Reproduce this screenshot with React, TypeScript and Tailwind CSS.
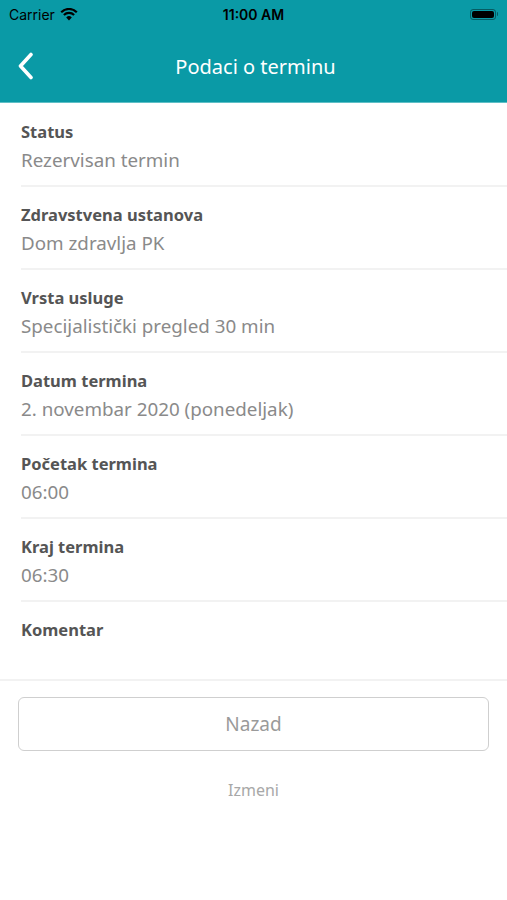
const ROWS = [
  { label: 'Status', value: 'Rezervisan termin' },
  { label: 'Zdravstvena ustanova', value: 'Dom zdravlja PK' },
  { label: 'Vrsta usluge', value: 'Specijalistički pregled 30 min' },
  { label: 'Datum termina', value: '2. novembar 2020 (ponedeljak)' },
  { label: 'Početak termina', value: '06:00' },
  { label: 'Kraj termina', value: '06:30' },
]

function StatusBar() {
  return (
    <div className="relative flex h-[28px] items-center px-[9px] text-[14px] text-black font-['Inter',sans-serif]">
      <div className="flex items-center gap-[5px]">
        <span>Carrier</span>
        <svg width="18" height="13" viewBox="0 0 18 13">
          <path d="M9 12.5 L6.2 9.4 A4 4 0 0 1 11.8 9.4 Z" fill="#000" />
          <path d="M3.9 7 A7.3 7.3 0 0 1 14.1 7" stroke="#000" strokeWidth="2.2" fill="none" />
          <path d="M1.2 4.2 A11 11 0 0 1 16.8 4.2" stroke="#000" strokeWidth="2.2" fill="none" />
        </svg>
      </div>
      <span className="absolute left-1/2 -translate-x-1/2 font-semibold">11:00 AM</span>
      <div className="ml-auto flex items-center">
        <div className="h-[11px] w-[26px] rounded-[3px] border border-black/40 p-[1px]">
          <div className="h-full w-full rounded-[2px] bg-black" />
        </div>
        <div className="ml-[1px] h-[4px] w-[1.5px] rounded-r bg-black/40" />
      </div>
    </div>
  )
}

export default function App() {
  return (
    <div className="flex min-h-[900px] flex-col bg-white font-['Noto_Sans',sans-serif]">
      <div className="bg-[#0a9aa6] border-b border-[#5fbfc6]">
        <StatusBar />
        <div className="relative flex h-[74px] items-center justify-center">
          <button className="absolute left-[17px] top-[24px]">
            <svg width="18" height="28" viewBox="0 0 18 28">
              <path d="M14 2.5 L3.5 14 L14 25.5" stroke="#fff" strokeWidth="3.6" fill="none" strokeLinecap="round" strokeLinejoin="round" />
            </svg>
          </button>
          <h1 className="mt-[3px] ml-[4px] text-[20px] text-white">Podaci o terminu</h1>
        </div>
      </div>

      <div className="pl-[21px] pt-[1px]">
        {ROWS.map((row) => (
          <div key={row.label} className="border-b-2 border-[#f2f2f2] pt-[15px] pb-[12px]">
            <p className="text-[16.5px] leading-[25px] font-bold text-[#555]">{row.label}</p>
            <p className="mt-[4px] text-[18.8px] leading-[25px] text-[#8a8a8a]">{row.value}</p>
          </div>
        ))}
        <div className="pt-[15px] pb-[37px]">
          <p className="text-[16.5px] leading-[25px] font-bold text-[#555]">Komentar</p>
        </div>
      </div>
      <div className="h-[2px] bg-[#f2f2f2]" />

      <div className="px-[18px] pt-[16px]">
        <button className="flex h-[54px] w-full items-center justify-center rounded-[6px] border border-[#cfcfcf] text-[19px] text-[#9a9a9a]">
          Nazad
        </button>
      </div>
      <p className="mt-[27px] text-center text-[16px] text-[#a8a8a8]">Izmeni</p>
    </div>
  )
}
